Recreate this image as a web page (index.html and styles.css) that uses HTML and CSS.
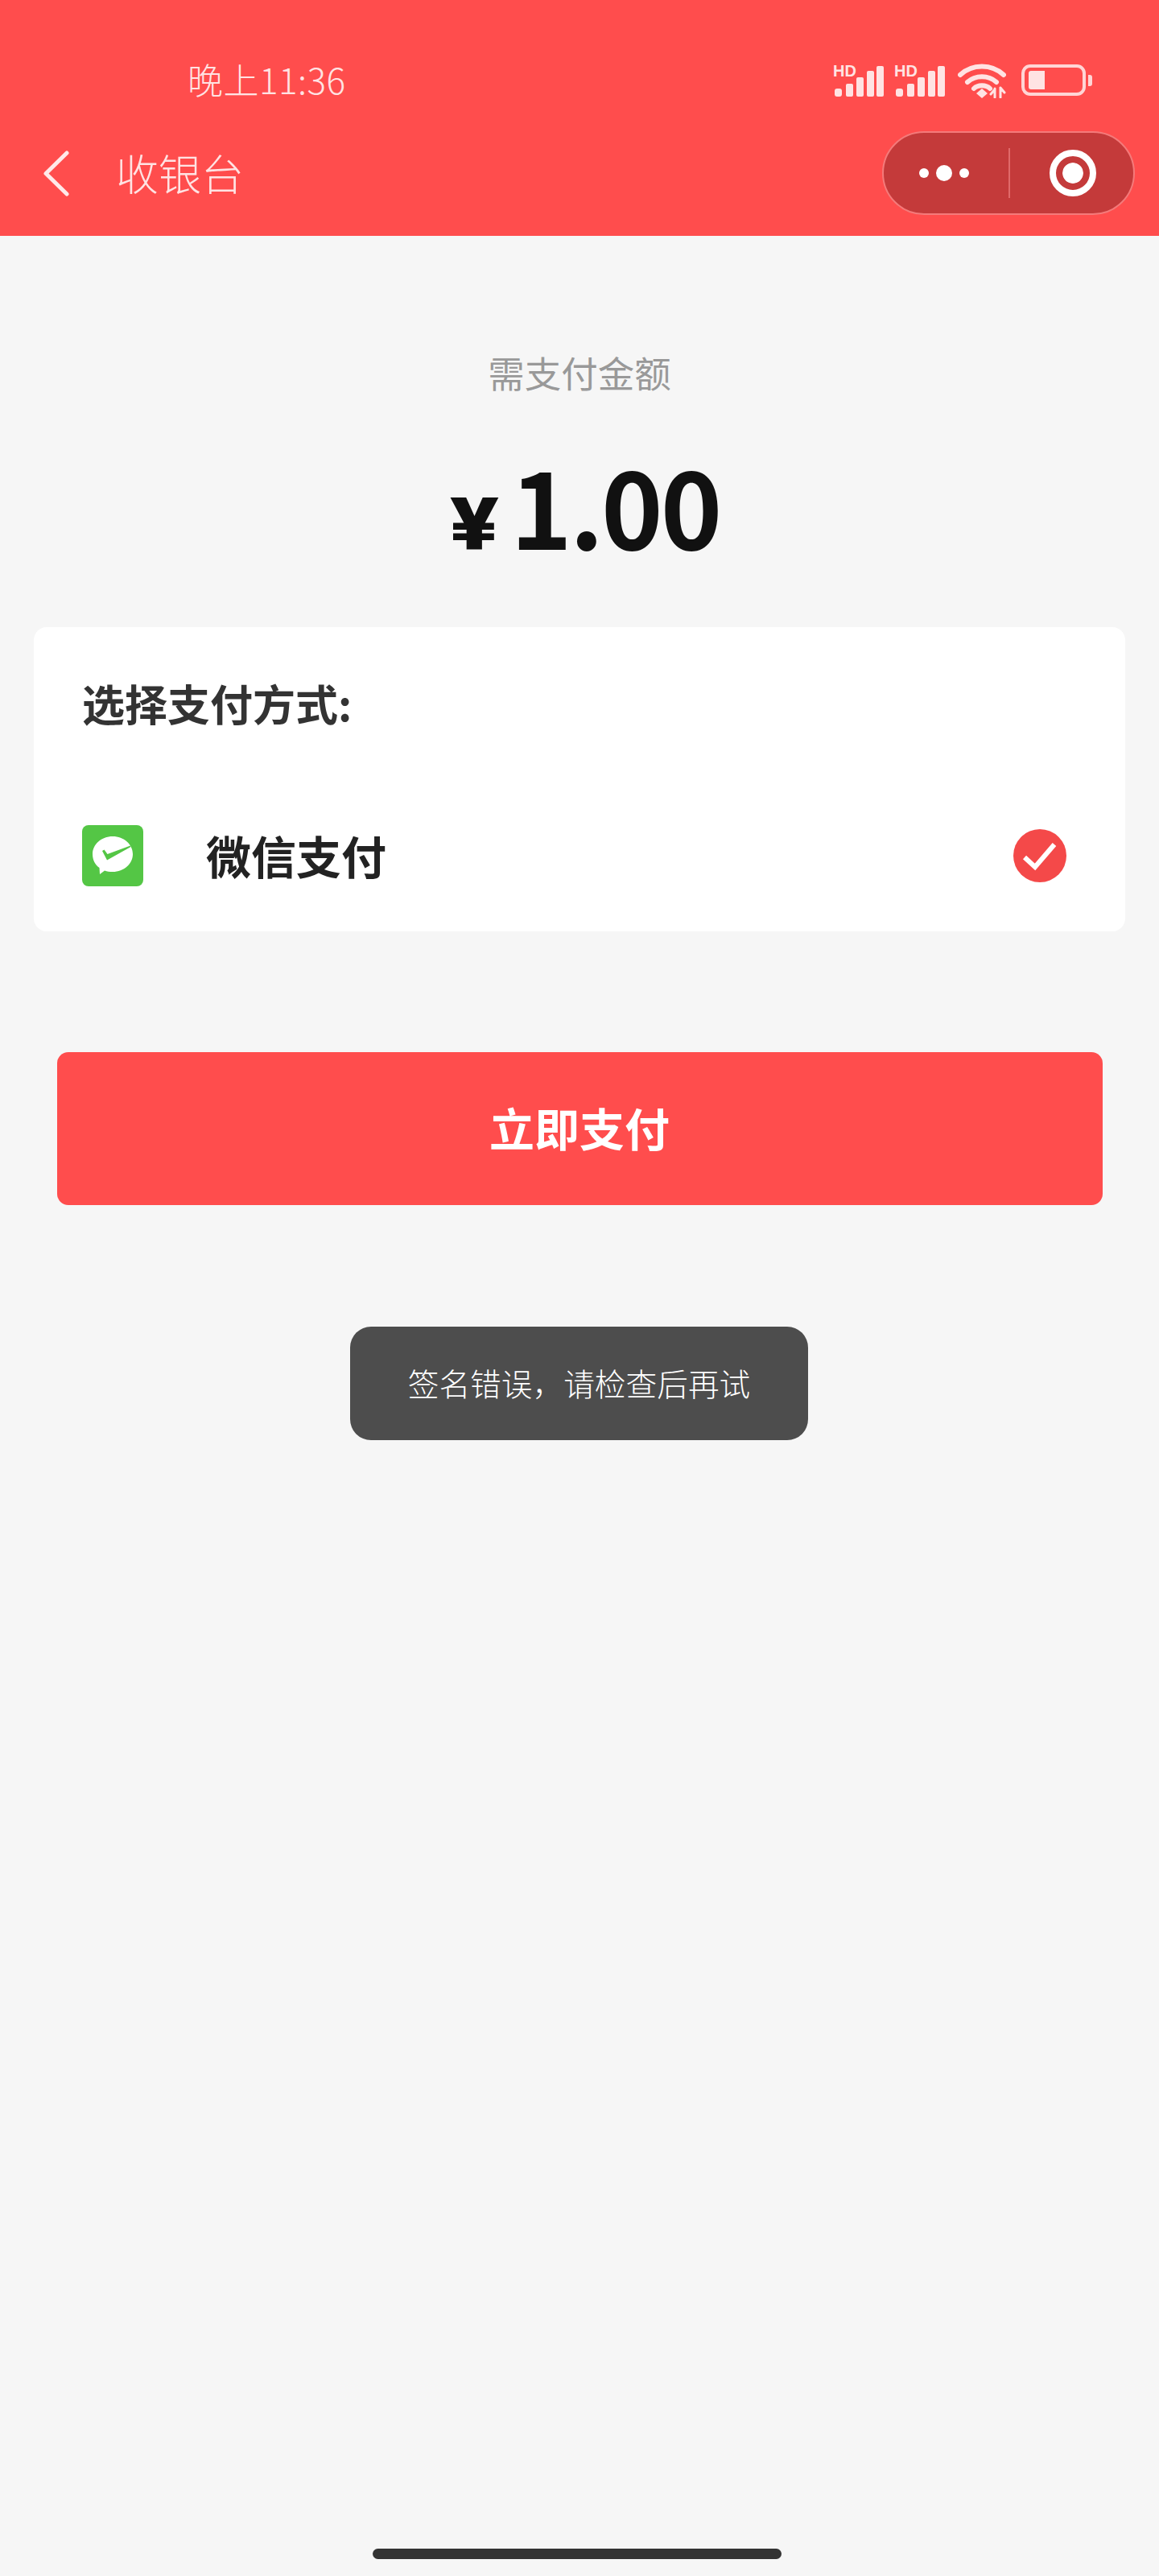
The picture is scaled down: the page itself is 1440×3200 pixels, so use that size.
FILE: index.html
```html
<!DOCTYPE html>
<html lang="zh-CN">
  <head>
    <meta charset="UTF-8" />
    <meta name="viewport" content="width=device-width, initial-scale=1.0" />
    <title>收银台</title>
    <link rel="stylesheet" href="styles.css">
  </head>
  <body>
    <div class="page">
      <header class="header">
        <!-- Status bar -->
        <div class="status-bar">
          <span class="time">晚上11:36</span>
          <div class="status-icons">
            <svg class="signal" width="63" height="46" viewBox="0 -6 63 46">
              <text class="hd" x="0" y="15">HD</text>
              <rect x="2" y="30" width="9" height="10" rx="3" />
              <rect x="16" y="24" width="9" height="16" rx="2" />
              <rect x="29" y="16" width="9" height="24" rx="2" />
              <rect x="42" y="8" width="9" height="32" rx="2" />
              <rect x="54" y="2" width="9" height="38" rx="2" />
            </svg>
            <svg class="signal" width="63" height="46" viewBox="0 -6 63 46">
              <text class="hd" x="0" y="15">HD</text>
              <rect x="2" y="30" width="9" height="10" rx="3" />
              <rect x="16" y="24" width="9" height="16" rx="2" />
              <rect x="29" y="16" width="9" height="24" rx="2" />
              <rect x="42" y="8" width="9" height="32" rx="2" />
              <rect x="54" y="2" width="9" height="38" rx="2" />
            </svg>
            <svg class="wifi" width="60" height="44" viewBox="0 0 60 44">
              <path d="M3 15 C18 1 42 1 57 15" />
              <path d="M12 24 C22 15 38 15 48 24" />
              <path d="M20 32 C25 27 35 27 40 32" />
              <path class="wifi-dot" d="M23 38 L30 32 L37 38 L30 44 Z" />
              <path class="wifi-arrows" d="M46 32 V43 M53 31 V43 M41 39 L46 33 M53 31 L58 37" />
            </svg>
            <div class="battery">
              <div class="battery-body"><div class="battery-level"></div></div>
              <div class="battery-tip"></div>
            </div>
          </div>
        </div>

        <!-- Nav bar -->
        <div class="nav-bar">
          <svg class="back" width="33" height="57" viewBox="0 0 33 57">
            <path d="M30 3 L4 28.500 L30 54" />
          </svg>
          <h1 class="nav-title">收银台</h1>
          <div class="capsule">
            <div class="capsule-more">
              <span class="dot"></span>
              <span class="dot dot-big"></span>
              <span class="dot"></span>
            </div>
            <div class="capsule-line"></div>
            <div class="capsule-close">
              <span class="target"></span>
            </div>
          </div>
        </div>
      </header>

      <main class="content">
        <div class="pay-label">需支付金额</div>
        <div class="amount">
          <span class="yen">¥</span>
          <span class="price">1.00</span>
        </div>

        <section class="card">
          <div class="card-title">选择支付方式:</div>
          <div class="pay-row">
            <svg class="wechat" width="76" height="76" viewBox="0 0 76 76">
              <rect width="76" height="76" rx="8" fill="#54c645" />
              <path
                fill="#fff"
                d="M38 14 C52 14 63 24 63 36 C63 48 52 58 38 58 C34 58 31 57.500 28 56.500 L22 61 L21.500 53 C16 49 13 43 13 36 C13 24 24 14 38 14 Z"
              />
              <path
                fill="#54c645"
                d="M25 32 L27.500 30.500 L31.500 36 L60 25.500 L60.500 27 L31 43.500 Z"
              />
            </svg>
            <span class="pay-name">微信支付</span>
            <svg class="check" width="66" height="66" viewBox="0 0 66 66">
              <circle cx="33" cy="33" r="33" fill="#f44949" />
              <path d="M14 35 L27 47 L51 19" />
            </svg>
          </div>
        </section>

        <button class="pay-btn">立即支付</button>

        <div class="toast">签名错误，请检查后再试</div>
      </main>

      <div class="home-bar"></div>
    </div>
  </body>
</html>
```

FILE: styles.css
```css
body {
  margin: 0;
  font-family: "Noto Sans CJK SC", "Noto Sans", sans-serif;
  background-color: #f6f6f6;
}
.page {
  display: flex;
  flex-direction: column;
  min-height: 3200px;
}
.header {
  background: #ff4d4d;
  height: 293px;
  color: #ffe3e3;
}
.status-bar {
  display: flex;
  justify-content: space-between;
  align-items: flex-start;
  height: 163px;
  box-sizing: border-box;
  padding: 76px 83px 0 233px;
}
.time {
  font-size: 44px;
  font-weight: 300;
  line-height: 44px;
  letter-spacing: 0.500px;
}
.status-icons {
  display: flex;
  align-items: flex-start;
  gap: 13px;
  padding-top: 4px;
}
.signal {
  margin-top: -6px;
}
.signal rect {
  fill: #ffe3e3;
}
.hd {
  font-family: "Liberation Sans", sans-serif;
  font-size: 20px;
  font-weight: bold;
  fill: #ffe3e3;
}
.wifi {
  margin: -2px 6px 0 3px;
}
.wifi path {
  fill: none;
  stroke: #ffe3e3;
  stroke-width: 6;
  stroke-linecap: round;
}
.wifi .wifi-dot {
  fill: #ffe3e3;
  stroke: none;
}
.wifi .wifi-arrows {
  stroke-width: 3;
}
.battery {
  display: flex;
  align-items: center;
  gap: 3px;
}
.battery-body {
  width: 80px;
  height: 39px;
  box-sizing: border-box;
  border: 4px solid #ffd5d5;
  border-radius: 11px;
  padding: 4px 5px;
}
.battery-level {
  width: 20px;
  height: 100%;
  background: #ffe3e3;
  border-radius: 3px 0 0 3px;
}
.battery-tip {
  width: 5px;
  height: 14px;
  background: #ffd5d5;
  border-radius: 0 3px 3px 0;
}
.nav-bar {
  display: flex;
  align-items: center;
  height: 104px;
  padding: 0 30px 0 53px;
}
.back path {
  fill: none;
  stroke: #ffe9e9;
  stroke-width: 5;
  stroke-linecap: round;
  stroke-linejoin: round;
}
.nav-title {
  margin: 0 0 3px 58px;
  font-size: 53px;
  font-weight: 300;
  line-height: 60px;
  flex: 1;
}
.capsule {
  display: flex;
  align-items: center;
  width: 314px;
  height: 104px;
  box-sizing: border-box;
  background: #c43a3a;
  border: 2px solid #f47a7a;
  border-radius: 52px;
}
.capsule-more {
  display: flex;
  align-items: center;
  justify-content: center;
  gap: 9px;
  width: 150px;
  margin-right: 5px;
}
.dot {
  width: 12px;
  height: 12px;
  background: #fff;
  border-radius: 50%;
}
.dot-big {
  width: 20px;
  height: 20px;
}
.capsule-line {
  width: 2px;
  height: 62px;
  background: #e06a6a;
}
.capsule-close {
  display: flex;
  align-items: center;
  justify-content: center;
  flex: 1;
  padding-left: 2px;
}
.target {
  width: 42px;
  height: 42px;
  box-sizing: border-box;
  border: 8px solid #c43a3a;
  outline: 8px solid #fff;
  border-radius: 50%;
  background: #fff;
  background-clip: padding-box;
}
.content {
  display: flex;
  flex-direction: column;
  align-items: center;
}
.pay-label {
  margin-top: 139px;
  font-size: 45.500px;
  line-height: 60px;
  color: #999;
}
.amount {
  display: flex;
  align-items: baseline;
  justify-content: center;
  gap: 20px;
  height: 287px;
  padding-top: 34px;
  box-sizing: border-box;
  margin-left: 20px;
  color: #111;
  font-weight: bold;
}
.yen {
  font-family: Roboto, sans-serif;
  font-size: 90px;
  font-weight: 900;
  line-height: 200px;
  transform: scaleX(1.250);
}
.price {
  font-size: 130px;
  line-height: 200px;
  letter-spacing: -3px;
}
.card {
  box-sizing: border-box;
  width: 1356px;
  height: 378px;
  background: #fff;
  border-radius: 16px;
  padding: 64px 59px 0 60px;
}
.card-title {
  font-size: 53px;
  font-weight: bold;
  line-height: 60px;
  color: #333;
}
.pay-row {
  display: flex;
  align-items: center;
  margin-top: 122px;
  height: 76px;
}
.pay-name {
  margin: 0 0 3px 78px;
  font-size: 56px;
  font-weight: bold;
  color: #222;
  flex: 1;
}
.pay-row .check {
  margin-right: 14px;
}
.check path {
  fill: none;
  stroke: #fff;
  stroke-width: 6;
}
.pay-btn {
  display: block;
  width: 1299px;
  height: 190px;
  margin-top: 150px;
  padding: 0 0 5px;
  border: none;
  border-radius: 14px;
  background: #ff4d4d;
  color: white;
  font-family: inherit;
  font-size: 56px;
  font-weight: bold;
}
.toast {
  box-sizing: border-box;
  width: 569px;
  height: 141px;
  margin-top: 151px;
  margin-right: 1px;
  background: #4d4d4d;
  border-radius: 26px;
  color: #fff;
  font-size: 38.700px;
  font-weight: 300;
  line-height: 139px;
  text-align: center;
}
.home-bar {
  width: 508px;
  height: 13px;
  margin: auto auto 21px 463px;
  background: #333;
  border-radius: 7px;
}
```
